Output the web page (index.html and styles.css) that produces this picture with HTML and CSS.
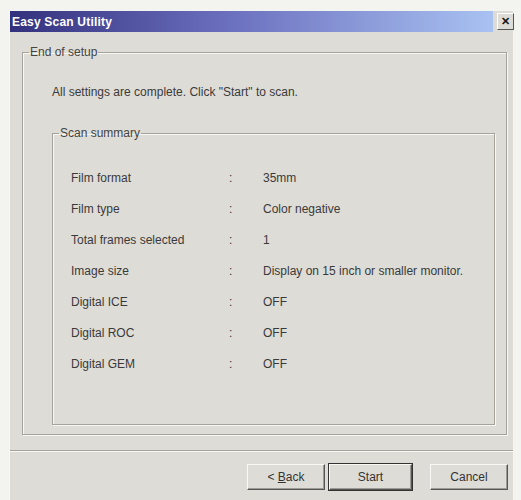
FILE: index.html
```html
<!DOCTYPE html>
<html>
<head>
  <meta charset="utf-8">
  <title>Easy Scan Utility</title>
  <link rel="stylesheet" href="styles.css">
</head>
<body>

<div class="window">
  <!-- caption -->
  <div class="titlebar">
    <span class="title">Easy Scan Utility</span>
    <span class="close">&#x2715;</span>
  </div>

  <div class="client">
    <fieldset class="group outer">
      <legend>End of setup</legend>
      <div class="outer-body">
        <p class="intro">All settings are complete. Click "Start" to scan.</p>

        <fieldset class="group inner">
          <legend>Scan summary</legend>
          <div class="summary">
            <span>Film format</span><span>:</span><span>35mm</span>
            <span>Film type</span><span>:</span><span>Color negative</span>
            <span>Total frames selected</span><span>:</span><span>1</span>
            <span>Image size</span><span>:</span><span>Display on 15 inch or smaller monitor.</span>
            <span>Digital ICE</span><span>:</span><span>OFF</span>
            <span>Digital ROC</span><span>:</span><span>OFF</span>
            <span>Digital GEM</span><span>:</span><span>OFF</span>
          </div>
        </fieldset>
      </div>
    </fieldset>

    <div class="sep"></div>

    <div class="buttons">
      <button class="btn back">&lt; <u>B</u>ack</button>
      <button class="btn default">Start</button>
      <button class="btn cancel">Cancel</button>
    </div>
  </div>
</div>

</body>
</html>
```

FILE: styles.css
```css
body{
  margin: 0;
  padding: 0;
  background: #f3f3ef;
  font-family: "Liberation Sans", Arial, sans-serif;
  font-size: 12px;
  color: #3a3a3a;
}

.window{
  width: 504px;
  height: 489px;
  margin: 11px 0 0 9px;
  background: #dedcd7;
  border-left: 1px solid #f6f6f2;
  box-sizing: border-box;
}

.titlebar{
  height: 21px;
  display: flex;
  align-items: center;
  justify-content: space-between;
  background: linear-gradient(to right, #33317e, #6d72c0 45%, #a9c2f2 96%, #dedcd7 96%);
}

.title{
  color: #fff;
  font-weight: bold;
  font-size: 12px;
  padding-left: 2px;
  letter-spacing: 0.2px;
}

.close{
  width: 15px;
  height: 15px;
  margin-right: -1px;
  background: #dedcd7;
  border: 1px solid #fff;
  border-right-color: #555;
  border-bottom-color: #555;
  color: #1a1a1a;
  font-size: 11px;
  font-weight: bold;
  line-height: 15px;
  text-align: center;
}

.client{
  padding: 13px 6px 0 12px;
}

.group{
  margin: 0;
  padding: 0;
  border: 1px solid #a6a39d;
  box-shadow: inset 1px 1px 0 #f7f7f4, 1px 1px 0 #f7f7f4;
}

.group legend{
  padding: 0 1px;
  margin-left: 6px;
  color: #444;
}

.outer{
  height: 390px;
  box-sizing: border-box;
}

.outer-body{
  padding: 0 11px 0 29px;
}

.intro{
  margin: 26px 0 27px 0;
}

.inner{
  height: 299px;
  box-sizing: border-box;
}

.summary{
  display: grid;
  grid-template-columns: 158px 34px auto;
  grid-auto-rows: 31px;
  padding: 31px 0 0 18px;
}

.sep{
  height: 0;
  margin: 15px -6px 0 -12px;
  border-top: 1px solid #a6a39d;
  border-bottom: 1px solid #f7f7f4;
}

.buttons{
  display: flex;
  justify-content: flex-end;
  padding: 12px 0 0 0;
}

.btn{
  width: 78px;
  height: 26px;
  font-family: "Liberation Sans", Arial, sans-serif;
  font-size: 12px;
  color: #333;
  background: #dedcd7;
  border: 1px solid #f8f8f5;
  border-right-color: #555;
  border-bottom-color: #555;
  box-shadow: inset -1px -1px 0 #9d9a94;
  padding: 0;
}

.default{
  margin-left: 4px;
  outline: 1px solid #333;
  outline-offset: 0;
  width: 83px;
}

.cancel{
  margin-left: 18px;
  margin-right: -1px;
}
```
